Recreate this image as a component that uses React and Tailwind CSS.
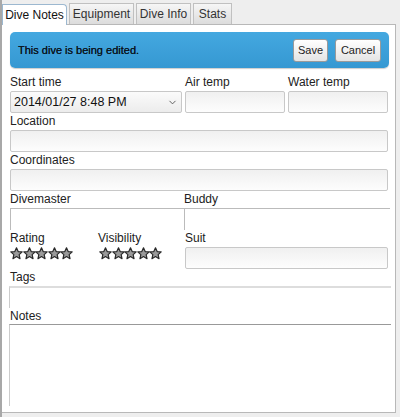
import { ChevronDown } from "lucide-react";

function Stars() {
  return (
    <div className="flex h-[13px] items-center">
      {[0, 1, 2, 3, 4].map((i) => (
        <svg key={i} width="13" height="13" viewBox="0 0 24 24" className="-mr-[0.5px]">
          <polygon
            points="12,1.5 15.1,8.4 22.5,9.1 16.9,14.1 18.5,21.5 12,17.7 5.5,21.5 7.1,14.1 1.5,9.1 8.9,8.4"
            fill="#9a9a9a"
            stroke="#2a2a2a"
            strokeWidth="2.2"
            strokeLinejoin="round"
          />
        </svg>
      ))}
    </div>
  );
}

function Label({ children }) {
  return <div className="h-4 text-[12px] leading-4 text-[#222]">{children}</div>;
}

const inputCls =
  "h-[22px] rounded-[2px] border border-[#c8c8c8] bg-gradient-to-b from-[#f0f0f0] to-[#fdfdfd]";

const tabCls =
  "flex h-[21px] items-center justify-center whitespace-nowrap border border-b-0 border-[#c0c0c0] bg-gradient-to-b from-[#f6f6f6] to-[#dcdcdc] text-[12px] text-[#333]";

export default function App() {
  return (
    <div
      className="flex h-[417px] w-[400px] flex-col bg-[#eeeeee] border-l-2 border-[#a8a8a8]"
      style={{ fontFamily: '"Liberation Sans", Arial, sans-serif' }}
    >
      {/* tabs */}
      <div className="flex h-6 items-end gap-[2px] pt-[3px]">
        <div className="relative -mb-px flex h-[21px] w-[65px] items-center justify-center whitespace-nowrap rounded-tr-[4px] border border-b-0 border-[#9cb8d0] bg-white text-[12px] text-[#111]">
          Dive Notes
        </div>
        <div className={tabCls + " w-[65px]"}>Equipment</div>
        <div className={tabCls + " w-[55px]"}>Dive Info</div>
        <div className={tabCls + " w-[39px]"}>Stats</div>
      </div>

      {/* panel */}
      <div className="mr-[4px] flex h-[389px] flex-col border-r border-b border-t border-[#b8b8b8] bg-white pl-2 pr-[6px] pt-[7px]">
        {/* banner */}
        <div className="flex h-9 items-center justify-between rounded-[5px] bg-gradient-to-b from-[#44a8e0] to-[#3598d2] pl-2 pr-[8px] shadow-[0_1px_1px_rgba(0,0,0,0.2)]">
          <span className="text-[11px] text-[#0b1722] [text-shadow:0_0_0.3px_#0b1722]">
            This dive is being edited.
          </span>
          <div className="flex gap-[7px]">
            <button className="h-[23px] w-[35px] rounded-[3px] border border-[#9a9a9a] bg-gradient-to-b from-white to-[#e4e4e4] text-[11px] text-[#222]">
              Save
            </button>
            <button className="h-[23px] w-[46px] rounded-[3px] border border-[#9a9a9a] bg-gradient-to-b from-white to-[#e4e4e4] text-[11px] text-[#222]">
              Cancel
            </button>
          </div>
        </div>

        <div className="mt-[6px] flex flex-col">
          {/* row 1 */}
          <div className="flex">
            <div className="w-[175px]">
              <Label>Start time</Label>
              <div className="mt-[1px] flex h-[22px] w-[172px] items-center justify-between rounded-[2px] border border-[#c8c8c8] bg-gradient-to-b from-[#fbfbfb] to-[#ececec] pl-[3px] pr-[3px] text-[12.5px] text-[#111]">
                <span>2014/01/27 8:48 PM</span>
                <ChevronDown size={11} strokeWidth={2} className="text-[#555]" />
              </div>
            </div>
            <div className="w-[103px]">
              <Label>Air temp</Label>
              <div className={inputCls + " mt-[1px] w-[100px]"} />
            </div>
            <div className="w-[100px]">
              <Label>Water temp</Label>
              <div className={inputCls + " mt-[1px] w-[100px]"} />
            </div>
          </div>

          <div>
            <Label>Location</Label>
            <div className={inputCls + " mt-[1px] w-[378px]"} />
          </div>

          <div>
            <Label>Coordinates</Label>
            <div className={inputCls + " mt-[1px] w-[378px]"} />
          </div>

          <div className="flex">
            <div className="w-[175px]">
              <Label>Divemaster</Label>
              <div className="mt-[1px] h-[22px] w-[174px] border-l border-t border-[#bbb]" />
            </div>
            <div className="flex-1">
              <Label>Buddy</Label>
              <div className="mt-[1px] h-[22px] w-[206px] border-l border-t border-[#bbb]" />
            </div>
          </div>

          <div className="flex">
            <div className="w-[88px]">
              <Label>Rating</Label>
              <div className="mt-[1px]">
                <Stars />
              </div>
            </div>
            <div className="w-[87px]">
              <Label>Visibility</Label>
              <div className="mt-[1px] pl-[1px]">
                <Stars />
              </div>
            </div>
            <div>
              <Label>Suit</Label>
              <div className={inputCls + " mt-[1px] w-[203px]"} />
            </div>
          </div>

          <div>
            <Label>Tags</Label>
            <div className="mt-[1px] -ml-px h-[22px] w-[382px] border-l border-t-2 border-l-[#ccc] border-t-[#ddd]" />
          </div>

          <div>
            <Label>Notes</Label>
            <div className="-ml-px h-[82px] w-[382px] border-l border-t border-l-[#ccc] border-t-[#999]" />
          </div>
        </div>
      </div>
    </div>
  );
}
